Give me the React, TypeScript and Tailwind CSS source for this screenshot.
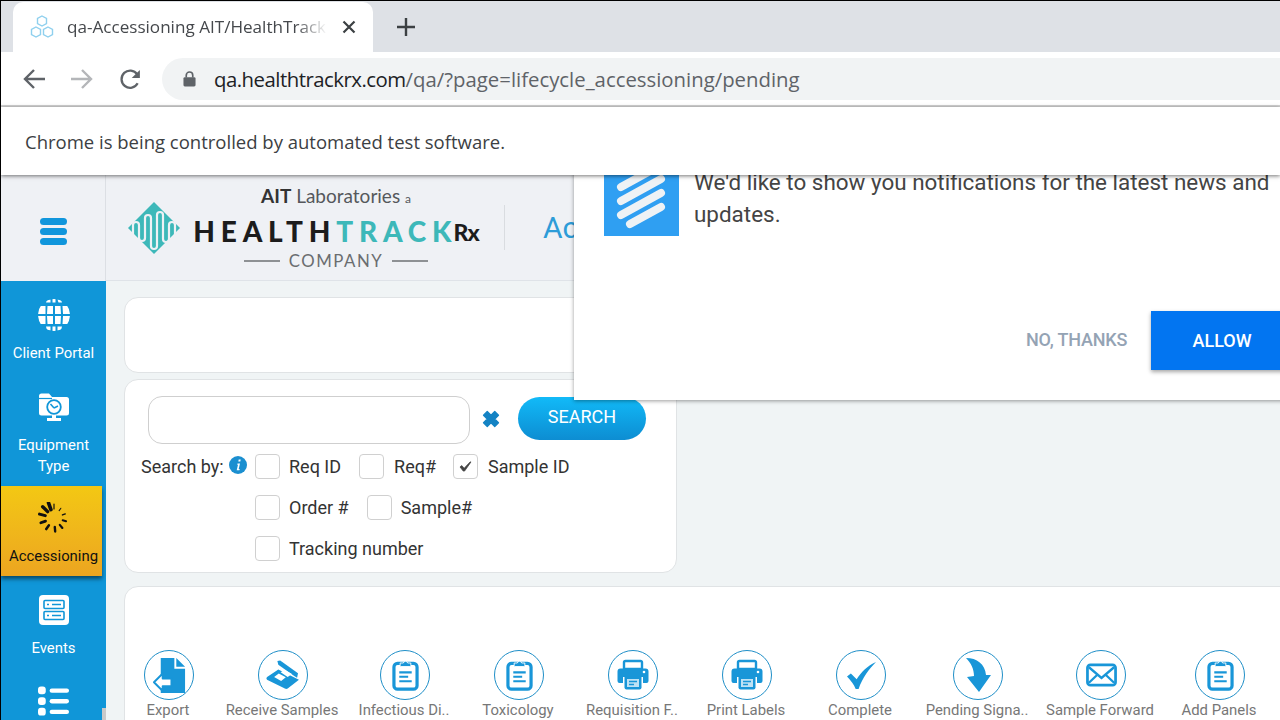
const Clipboard = () => (
  <svg viewBox="0 0 30 36" className="h-[32px] w-[27px]">
    <rect x="2" y="5" width="26" height="29" rx="4" fill="none" stroke="#1996d8" strokeWidth="3.6" />
    <path d="M9 7V4.500h3.500a2.600 2.600 0 0 1 5 0H21V7.500a1 1 0 0 1-1 1H10a1 1 0 0 1-1-1z" fill="#1996d8" stroke="#fff" strokeWidth="1" />
    <path d="M8 15h14M8 20h10M8 25h14" stroke="#1996d8" strokeWidth="2.400" fill="none" />
  </svg>
);

const Printer = () => (
  <svg viewBox="0 0 32 32" className="h-[32px] w-[32px]">
    <path d="M7 10V3.500A1.500 1.500 0 0 1 8.500 2h15A1.500 1.500 0 0 1 25 3.500V10z" fill="none" stroke="#1996d8" strokeWidth="2.400" />
    <path d="M3.500 9.500h25a3 3 0 0 1 3 3V22a2 2 0 0 1-2 2H26v-6H6v6H2.500a2 2 0 0 1-2-2v-9.500a3 3 0 0 1 3-3z" fill="#1996d8" />
    <circle cx="27" cy="13" r="1.300" fill="#fff" />
    <path d="M7.500 17.500h17v11a2 2 0 0 1-2 2h-13a2 2 0 0 1-2-2z" fill="#1996d8" />
    <path d="M10 20h12v8H10z" fill="#bfe2f5" />
    <path d="M12 22.500h8M12 25.500h5" stroke="#1996d8" strokeWidth="1.300" />
  </svg>
);

const toolbarItems = [
  {
    label: 'Export',
    width: 'w-[86px]',
    icon: (
      <svg viewBox="0 0 36 38" className="h-[37px] w-[35px]">
        <path d="M9 1h14v11h11v25H9z" fill="#1996d8" />
        <path d="M25 1l9 9h-9z" fill="#1996d8" />
        <path d="M2 26l9-9v5h9v8h-9v5z" fill="#fff" stroke="#1996d8" strokeWidth="2" strokeLinejoin="round" />
      </svg>
    ),
  },
  {
    label: 'Receive Samples',
    width: 'w-[142px]',
    icon: (
      <svg viewBox="0 0 36 32" className="h-[30px] w-[34px]">
        <path d="M12 1l3-0.500L34 14l-1 5-3-2L13 5z" fill="#1996d8" />
        <path d="M1 18l12-8 22 11-12 9.500a3 3 0 0 1-3 0L2 21.500a2 2 0 0 1-1-3.500z" fill="#1996d8" />
        <path d="M8.500 18l5-3.500 7.500 4-5 4zM15.500 13l4-2.500 8 4.500-4.500 3z" fill="#fff" />
      </svg>
    ),
  },
  { label: 'Infectious Di..', width: 'w-[102px]', icon: <Clipboard /> },
  { label: 'Toxicology', width: 'w-[126px]', icon: <Clipboard /> },
  { label: 'Requisition F..', width: 'w-[102px]', icon: <Printer /> },
  { label: 'Print Labels', width: 'w-[126px]', icon: <Printer /> },
  {
    label: 'Complete',
    width: 'w-[102px]',
    icon: (
      <svg viewBox="0 0 32 30" className="h-[29px] w-[31px]">
        <path d="M1 16l4-3 6 6C16 11 22 5 31 1c-7 7-14 16-18 28h-3C8 24 5 20 1 16z" fill="#1996d8" />
      </svg>
    ),
  },
  {
    label: 'Pending Signa..',
    width: 'w-[132px]',
    icon: (
      <svg viewBox="0 0 26 36" className="h-[36px] w-[26px]">
        <path d="M1 1c11 0 19 6 20 17h5L14 35 2 20l7-1C9 12 6 6 1 1z" fill="#1996d8" />
      </svg>
    ),
  },
  {
    label: 'Sample Forward',
    width: 'w-[114px]',
    icon: (
      <svg viewBox="0 0 32 24" className="h-[24px] w-[31px]">
        <rect x="1.500" y="1.500" width="29" height="21" rx="3" fill="none" stroke="#1996d8" strokeWidth="2.800" />
        <path d="M3 4l13 11L29 4M3 20l9-8.500M29 20l-9-8.500" fill="none" stroke="#1996d8" strokeWidth="2.400" />
      </svg>
    ),
  },
  { label: 'Add Panels', width: 'w-[124px]', icon: <Clipboard /> },
];

const SideItem = ({ icon, label, active }: { icon: React.ReactNode; label: React.ReactNode; active?: boolean }) => (
  <div
    className={
      active
        ? 'mr-[4px] flex h-[90px] flex-col items-center bg-gradient-to-b from-[#f3c813] to-[#eca520] pl-[4px] pt-[15px] text-[14.900px] leading-[21px] text-[#111] shadow-[0_3px_4px_rgba(0,0,0,0.5)]'
        : 'flex flex-col items-center text-center text-[14.900px] leading-[21px] text-white'
    }
  >
    <div className="flex h-[34px] items-center justify-center">{icon}</div>
    <div className="mt-[11px]">{label}</div>
  </div>
);

const Spinner = () => (
  <svg viewBox="-16 -16 32 32" className="h-[32px] w-[32px]">
    {[
      [0, 1.200, 5],
      [35, 1, 3],
      [70, 1.400, 3],
      [105, 2, 3.500],
      [140, 2.200, 4],
      [175, 2.400, 4.500],
      [215, 2.600, 4.500],
      [250, 2.800, 5],
      [285, 3, 6],
      [315, 3.400, 7],
      [340, 3.600, 7],
    ].map(([angle, w, len]) => (
      <line key={angle} x1="0" y1="-9" x2="0" y2={-9 - len} stroke="#111" strokeWidth={w} strokeLinecap="round" transform={`rotate(${angle})`} />
    ))}
  </svg>
);

const Check = ({ checked }: { checked?: boolean }) => (
  <span className="flex h-[25px] w-[25px] shrink-0 items-center justify-center rounded-[4px] border border-[#d0d0d0] bg-white">
    {checked && (
      <svg viewBox="0 0 14 12" className="h-[11px] w-[13px]">
        <path d="M1 6.500l2-1.500 2.500 3L12 1h1L6 11H4.500z" fill="#444" stroke="#444" strokeWidth="0.800" />
      </svg>
    )}
  </span>
);

const Opt = ({ label, checked, className }: { label: string; checked?: boolean; className?: string }) => (
  <label className={`flex items-center ${className ?? 'gap-[9px]'}`}>
    <Check checked={checked} />
    <span>{label}</span>
  </label>
);

export default function App() {
  return (
    <div className="relative flex h-[720px] w-[1280px] flex-col overflow-hidden border-l border-t border-black bg-white font-['Roboto',sans-serif]">
      {/* Browser chrome */}
      <div className="relative z-20 shrink-0 font-['Open_Sans',sans-serif]">
        <div className="flex h-[51px] items-end bg-[#dee1e6] pl-[12px]">
          <div className="relative flex h-[50px] w-[360px] items-center rounded-t-[10px] bg-white pl-[16px] pr-[17px]">
            <svg viewBox="0 0 26 24" className="h-[24px] w-[26px] shrink-0" fill="none" stroke="#8fd0ee" strokeWidth="1.400">
              <path d="M13 1l4.500 2.500v5L13 11 8.500 8.500v-5zM7 12l4.500 2.500v5L7 22l-4.500-2.500v-5zM19 12l4.500 2.500v5L19 22l-4.500-2.500v-5z" />
            </svg>
            <div className="ml-[12px] w-[260px] overflow-hidden whitespace-nowrap text-[17.100px] text-[#45484c] [mask-image:linear-gradient(to_right,black_88%,transparent)]">
              qa-Accessioning AIT/HealthTrack Rx
            </div>
            <svg viewBox="0 0 14 14" className="ml-auto h-[14px] w-[14px]" stroke="#3c4043" strokeWidth="2.200">
              <path d="M1.500 1.500l11 11M12.500 1.500l-11 11" />
            </svg>
          </div>
          <svg viewBox="0 0 18 18" className="mb-[16px] ml-[24px] h-[18px] w-[18px]" stroke="#3c4043" strokeWidth="2.400">
            <path d="M9 0v18M0 9h18" />
          </svg>
        </div>
        <div className="flex h-[55px] items-center border-b-2 border-[#d3d3d3] bg-white pl-[22px]">
          <svg viewBox="0 0 22 20" className="h-[20px] w-[22px]" fill="none" stroke="#5f6368" strokeWidth="2.400">
            <path d="M22 10H2M11 1l-9 9 9 9" />
          </svg>
          <svg viewBox="0 0 22 20" className="ml-[26px] h-[20px] w-[22px]" fill="none" stroke="#b4b6b9" strokeWidth="2.400">
            <path d="M0 10h20M11 1l9 9-9 9" />
          </svg>
          <svg viewBox="0 0 22 22" className="ml-[27px] mt-[2px] h-[21px] w-[21px]" fill="none" stroke="#5f6368" strokeWidth="2.400">
            <path d="M18.500 15A9 9 0 1 1 18 5.500" />
            <path d="M20.800 1v8.500h-8.500z" fill="#5f6368" stroke="none" />
          </svg>
          <div className="ml-[21px] flex h-[42px] flex-1 items-center rounded-l-full bg-[#f1f3f4] pl-[21px]">
            <svg viewBox="0 0 14 17" className="h-[16px] w-[13px]">
              <path d="M3.500 7V4.500a3.500 3.500 0 0 1 7 0V7" fill="none" stroke="#5f6368" strokeWidth="1.800" />
              <rect x="0.500" y="6.500" width="13" height="10" rx="1.500" fill="#5f6368" />
            </svg>
            <div className="ml-[18px] mt-[2px] whitespace-nowrap text-[20.350px] text-[#5f6368]">
              <span className="tracking-[-0.500px] text-[#202124]">qa.healthtrackrx.com</span>/qa/?page=lifecycle_accessioning/pending
            </div>
          </div>
        </div>
        <div className="flex h-[68px] items-center bg-white pl-[24px] pt-[2px] text-[18.500px] text-[#3c4043] shadow-[0_1px_4px_rgba(0,0,0,0.55)]">
          Chrome is being controlled by automated test software.
        </div>
      </div>

      {/* Page */}
      <div className="relative flex min-h-0 flex-1 overflow-hidden bg-[#f0f4f5]">
        <aside className="flex w-[105px] shrink-0 flex-col">
          <div className="flex h-[106px] shrink-0 items-center justify-center border-r border-[#dcdfe4] bg-[#eff1f5]">
            <div className="mt-[6px] flex w-[27px] flex-col gap-[3px]">
              <span className="h-[7px] rounded-full bg-[#1096dc]" />
              <span className="h-[7px] rounded-full bg-[#1096dc]" />
              <span className="h-[7px] rounded-full bg-[#1096dc]" />
            </div>
          </div>
          <div className="relative flex flex-1 flex-col bg-[#1096d8] pt-[17px]">
            <SideItem
              label="Client Portal"
              icon={
                <svg viewBox="0 0 32 32" className="h-[32px] w-[32px]" fill="#fff">
                  <defs>
                    <clipPath id="globe">
                      <circle cx="16" cy="16" r="16" />
                    </clipPath>
                  </defs>
                  <g clipPath="url(#globe)">
                    <path d="M9 0.500h3.500v3H8zM14.500 0h3v3.500h-3zM19.500 0.500H23l1 3h-3.500z" />
                    <path d="M1 7h6.500v8H0zM9.500 7h5.500v8H9zM17 7h5.500l.5 8h-6zM24.500 7H31l1 8h-7zM0 17h7.500v8H1zM9 17h6v8H9.500zM17 17h6l-.5 8H17zM25 17h7l-1 8h-6.500z" />
                    <path d="M8 27.500h4.500v4H9zM14.500 27.500h3V32h-3zM19.500 27.500H24l-1 4h-3.500z" />
                  </g>
                </svg>
              }
            />
            <div className="mt-[26px]">
              <SideItem
                label={
                  <>
                    Equipment
                    <br />
                    Type
                  </>
                }
                icon={
                  <svg viewBox="0 0 32 30" className="h-[30px] w-[32px]">
                    <path d="M1 4a2.500 2.500 0 0 1 2.500-2.500H11L14 5h14.500A2.500 2.500 0 0 1 31 7.500V21a2.500 2.500 0 0 1-2.500 2.500h-25A2.500 2.500 0 0 1 1 21z" fill="#fff" />
                    <path d="M1 6.500h13" stroke="#1096d8" strokeWidth="1.200" />
                    <circle cx="16" cy="15" r="6.800" fill="#fff" stroke="#1096d8" strokeWidth="1.800" />
                    <path d="M16 16l-3.500-4M16 16l4-2" stroke="#1096d8" strokeWidth="1.500" />
                    <path d="M14 23h4v3h5v3H9v-3h5z" fill="#fff" />
                  </svg>
                }
              />
            </div>
            <div className="mt-[9px]">
              <SideItem active label="Accessioning" icon={<Spinner />} />
            </div>
            <div className="mt-[17px]">
              <SideItem
                label="Events"
                icon={
                  <svg viewBox="0 0 30 30" className="h-[30px] w-[30px]">
                    <rect width="30" height="30" rx="4" fill="#fff" />
                    <rect x="5" y="5.500" width="20" height="8" rx="1" fill="none" stroke="#1096d8" strokeWidth="1.600" />
                    <rect x="5" y="16.500" width="20" height="8" rx="1" fill="none" stroke="#1096d8" strokeWidth="1.600" />
                    <path d="M8 9.500h2M8 20.500h2M13 9.500h9M13 20.500h9" stroke="#1096d8" strokeWidth="1.600" />
                  </svg>
                }
              />
            </div>
            <div className="mt-[27px] flex justify-center">
              <svg viewBox="0 0 32 30" className="h-[30px] w-[31px] shrink-0" fill="#fff">
                <rect y="0" width="8" height="8" rx="3" />
                <rect y="11" width="8" height="8" rx="3" />
                <rect y="22" width="8" height="8" rx="3" />
                <rect x="12" y="2" width="20" height="4.500" rx="2.200" />
                <rect x="12" y="13" width="20" height="4.500" rx="2.200" />
                <rect x="12" y="24" width="20" height="4.500" rx="2.200" />
              </svg>
            </div>
            <div className="absolute bottom-0 right-0 h-[12px] w-[4px] bg-[#c9c9c9]" />
          </div>
        </aside>

        <div className="flex min-w-0 flex-1 flex-col">
          {/* Logo header */}
          <header className="flex h-[106px] shrink-0 items-center border-b border-[#dfe3e8] bg-[#eff1f5]">
            <div className="ml-[21px] flex items-center">
              <svg viewBox="0 0 54 54" className="h-[54px] w-[54px] shrink-0">
                <path d="M27 1l26 26-26 26L1 27z" fill="#3db8b9" />
                <path d="M6 35V24a3 3 0 0 1 6 0v13a3 3 0 0 0 6 0V17a3 3 0 0 1 6 0v28a3 3 0 0 0 6 0V14a3 3 0 0 1 6 0v24a3 3 0 0 0 6 0V24a3 3 0 0 1 6 0v10" fill="none" stroke="#eff1f5" strokeWidth="2.200" />
              </svg>
              <div className="ml-[10px] flex w-[290px] flex-col items-center">
                <div className="font-['Lato',sans-serif] text-[19px] leading-[22px] text-[#55585c]">
                  <b className="text-[#333]">AIT</b> Laboratories <span className="text-[12px]">a</span>
                </div>
                <div className="mt-[6px] flex items-start whitespace-nowrap font-['Lato',sans-serif] text-[28px] font-black leading-[30px] text-[#1c1c1c]">
                  <span className="tracking-[5.800px]">HEALTH</span>
                  <span className="tracking-[5.800px] text-[#3db8b9]">TRAC</span>
                  <span className="text-[#3db8b9]">K</span>
                  <span className="ml-[2px] mt-[1px] text-[23px] tracking-[-1px]">Rx</span>
                </div>
                <div className="mt-[4px] flex items-center gap-[9px] font-['Lato',sans-serif] text-[16.800px] leading-[20px] tracking-[1.500px] text-[#6a6d70]">
                  <span className="h-[2px] w-[36px] bg-[#8e9194]" />
                  COMPANY
                  <span className="h-[2px] w-[36px] bg-[#8e9194]" />
                </div>
              </div>
            </div>
            <div className="ml-[23px] h-[45px] w-px bg-[#d9dce0]" />
            <div className="ml-[38px] whitespace-nowrap text-[30px] text-[#2d9cd8]">Accessioning</div>
          </header>

          {/* Cards */}
          <div className="relative flex flex-col pl-[18px] pt-[16px]">
            <div className="h-[76px] w-[1200px] rounded-[14px] border border-[#e0e3e5] bg-white" />
            <div className="mt-[6px] h-[194px] w-[553px] rounded-[14px] border border-[#e0e3e5] bg-white pl-[16px] pt-[16px] text-[18px] leading-[25px] text-[#333]">
              <div className="flex items-start pl-[7px]">
                <div className="h-[48px] w-[322px] rounded-[14px] border border-[#cfcfcf]" />
                <svg viewBox="0 0 16 16" className="ml-[11px] mt-[13px] h-[20px] w-[20px]">
                  <path d="M2 5l3-3 3 3 3-3 3 3-3 3 3 3-3 3-3-3-3 3-3-3 3-3z" fill="#1483c4" stroke="#1483c4" strokeLinejoin="round" />
                </svg>
                <div className="ml-[17px] mt-[1px] flex h-[43px] w-[128px] items-center justify-center rounded-full bg-gradient-to-b from-[#12baf8] to-[#0d8dd2] pb-[5px] text-white">
                  SEARCH
                </div>
              </div>
              <div className="mt-[10px] flex items-start">
                <div className="flex h-[25px] w-[114px] shrink-0 items-center whitespace-nowrap">
                  Search by:
                  <svg viewBox="0 0 18 18" className="ml-[5px] mt-[-3px] h-[18px] w-[18px] shrink-0">
                    <circle cx="9" cy="9" r="9" fill="#1b8fd0" />
                    <path d="M8.500 7.500h2.500L9.700 13h1l-.3 1.300H7.700L9 8.800H8.200zM9.700 3.500h2l-.4 2h-2z" fill="#fff" />
                  </svg>
                </div>
                <div className="flex flex-col gap-[16px]">
                  <div className="flex items-center">
                    <Opt label="Req ID" />
                    <Opt label="Req#" className="ml-[18px] gap-[10px]" />
                    <Opt label="Sample ID" checked className="ml-[17px] gap-[10px]" />
                  </div>
                  <div className="flex items-center">
                    <Opt label="Order #" />
                    <Opt label="Sample#" className="ml-[18px] gap-[9px]" />
                  </div>
                  <Opt label="Tracking number" />
                </div>
              </div>
            </div>
            <div className="mt-[13px] flex h-[200px] w-[1200px] items-start rounded-[14px] border border-[#e0e3e5] bg-white pl-[1px] pt-[63px]">
              {toolbarItems.map((item) => (
                <div key={item.label} className={`flex shrink-0 flex-col items-center ${item.width}`}>
                  <div className="flex h-[50px] w-[50px] items-center justify-center rounded-full border border-[#1f8fc8]">{item.icon}</div>
                  <div className="mr-[2px] mt-[1px] whitespace-nowrap text-[14.900px] leading-[18px] text-[#777]">{item.label}</div>
                </div>
              ))}
            </div>
          </div>
        </div>

        {/* Notification prompt */}
        <div className="absolute left-[573px] top-[-30px] h-[255px] w-[720px] bg-white pl-[30px] pt-[16px] shadow-[0_1px_4px_rgba(0,0,0,0.4)]">
          <div className="flex items-start">
            <div className="flex h-[75px] w-[75px] shrink-0 items-center justify-center bg-[#2f9ff2]">
              <svg viewBox="0 0 75 75" className="h-[75px] w-[75px]" stroke="#eef2f5" strokeWidth="8" strokeLinecap="round">
                <path d="M17 26l40-22M17 40l40-22M17 54l40-22M26 63l31-17" />
              </svg>
            </div>
            <div className="ml-[15px] mt-[5px] w-[590px] text-[22.450px] leading-[32px] text-[#444]">
              We'd like to show you notifications for the latest news and updates.
            </div>
          </div>
          <div className="absolute left-[452px] top-[166px] flex h-[59px] items-center">
            <div className="mr-[23px] w-[102px] whitespace-nowrap pb-[3px] text-[18px] font-medium tracking-[-0.200px] text-[#94a3b4]">NO, THANKS</div>
            <div className="flex h-[59px] w-[142px] items-center justify-center bg-[#0275f1] pb-[1px] text-[18px] font-medium text-white shadow-[0_2px_4px_rgba(0,0,0,0.35)]">
              ALLOW
            </div>
          </div>
        </div>
      </div>
    </div>
  );
}
